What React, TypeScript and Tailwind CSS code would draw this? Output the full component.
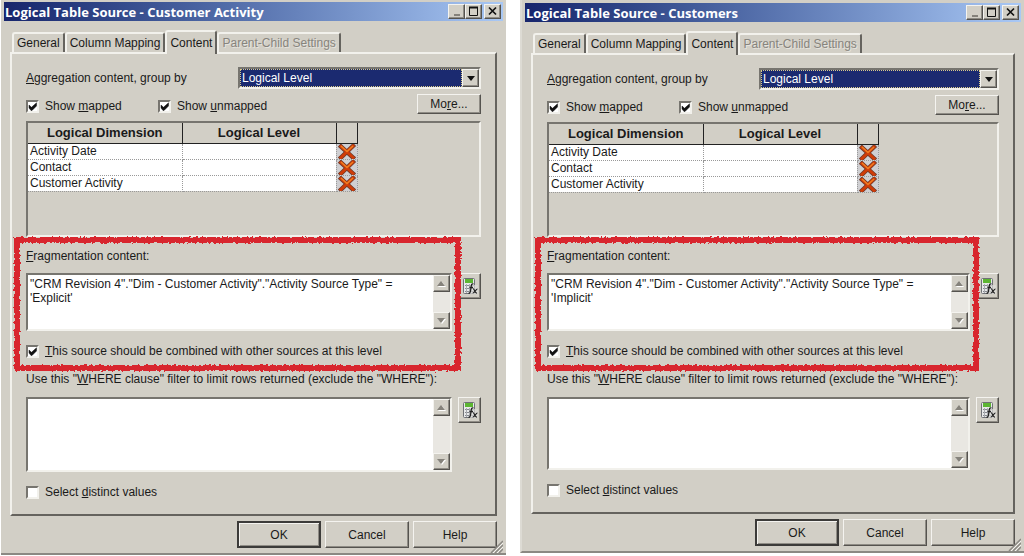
import type { ReactNode } from "react";

interface DialogProps {
  id: string;
  title: string;
  fragment: string;
  className: string;
  gridClass: string;
  whereClass: string;
}

const face = "bg-[#d2cfc6]";
const raised =
  "border border-t-[#f4f3ef] border-l-[#f4f3ef] border-r-[#55534f] border-b-[#55534f] shadow-[inset_-1px_-1px_0_#8f8c85]";
const sunken =
  "border-2 border-t-[#77756f] border-l-[#77756f] border-r-[#f2f1ec] border-b-[#f2f1ec]";

const rows = ["Activity Date", "Contact", "Customer Activity"];

function CheckBox({ id, checked = false, children }: { id: string; checked?: boolean; children: ReactNode }) {
  return (
    <div className="flex h-4 items-center gap-1.5">
      <span className="relative flex">
        <input
          id={id}
          type="checkbox"
          defaultChecked={checked}
          className={`peer size-[13px] appearance-none bg-white ${sunken}`}
        />
        <svg viewBox="0 0 13 13" className="pointer-events-none absolute inset-0 hidden size-[13px] peer-checked:block">
          <path d="M3 5v3l2 2.500h1l4.500-4.500V2.800L5.500 7.300z" fill="#111" stroke="#111" strokeWidth="0.500" />
        </svg>
      </span>
      <label htmlFor={id}>{children}</label>
    </div>
  );
}

function ScrollBar() {
  return (
    <div className="flex w-[17px] shrink-0 flex-col justify-between bg-[#e9e7e2]">
      <button type="button" aria-label="Scroll up" className={`flex h-[17px] items-center justify-center ${face} ${raised}`}>
        <svg viewBox="0 0 9 6" className="h-1.5 w-[9px]">
          <path d="M1 6h8L5 1z" fill="#fff" />
          <path d="M0 5h8L4 0z" fill="#85827b" />
        </svg>
      </button>
      <button type="button" aria-label="Scroll down" className={`flex h-[17px] items-center justify-center ${face} ${raised}`}>
        <svg viewBox="0 0 9 6" className="h-1.5 w-[9px]">
          <path d="M1 1h8L5 6z" fill="#fff" />
          <path d="M0 0h8L4 5z" fill="#85827b" />
        </svg>
      </button>
    </div>
  );
}

function FormulaButton() {
  return (
    <button type="button" aria-label="Expression builder" className={`flex h-[26px] w-[23px] shrink-0 items-center justify-center ${face} ${raised}`}>
      <svg viewBox="0 0 18 20" className="h-5 w-[18px]">
        <rect x="2.500" y="2.500" width="11" height="15" rx="1" fill="#e8e9ea" stroke="#6f7176" />
        <rect x="4" y="3" width="8" height="4" fill="#5cb532" />
        <path d="M4 9.500h9M4 12.500h9M4 15.500h9" stroke="#85888e" />
        <path d="M5.500 8v9M8.500 8v9" stroke="#a9abb0" />
        <rect x="9" y="9" width="8" height="9" fill="#dcdcd8" fillOpacity="0.7" />
        <path d="M12.500 8c-1.700-.8-2.200 1-2.400 3l-.6 4c-.3 1.800-.9 2.500-2 2M8.500 11.500h3.500" fill="none" stroke="#222" strokeWidth="1.300" />
        <path d="M12 13c1.500-.5 1.800 4.500 4 4M16.500 13c-1.500-.2-3 4.200-4.800 4" fill="none" stroke="#222" strokeWidth="1.200" />
      </svg>
    </button>
  );
}

function DeleteIcon() {
  return (
    <svg viewBox="0 0 20 15" className="mx-auto h-[15px] w-5">
      <path d="M4 2.500L16 13.500M16 2L4 13.500" stroke="#6b3a2c" strokeWidth="4.400" strokeLinecap="square" />
      <path d="M4 2.500L16 13.500M16 2L4 13.500" stroke="#cf3c08" strokeWidth="3" strokeLinecap="square" />
      <path d="M4 2L10 7.500L16 2" fill="none" stroke="#f07f22" strokeWidth="1.500" />
    </svg>
  );
}

function Marker({ id }: { id: string }) {
  return (
    <svg className="pointer-events-none absolute -top-2.5 -left-3 h-[calc(100%+22px)] w-[calc(100%-8px)] overflow-visible">
      <filter id={id} x="-2%" y="-5%" width="104%" height="110%">
        <feTurbulence type="fractalNoise" baseFrequency="0.4" numOctaves="2" result="noise" />
        <feDisplacementMap in="SourceGraphic" in2="noise" scale="4" xChannelSelector="R" yChannelSelector="G" />
      </filter>
      <rect x="3" y="3" className="h-[calc(100%-6px)] w-[calc(100%-6px)]" fill="none" stroke="#d8282e" strokeWidth="6" filter={`url(#${id})`} />
    </svg>
  );
}

function Tab({ active = false, disabled = false, children }: { active?: boolean; disabled?: boolean; children: ReactNode }) {
  return (
    <button
      type="button"
      role="tab"
      aria-selected={active}
      disabled={disabled}
      className={`rounded-t-[3px] border-t-2 border-l-2 border-r-2 border-t-[#f2f1ec] border-l-[#f2f1ec] border-r-[#65635e] px-[3px] whitespace-nowrap ${face} ${
        active ? "relative -mb-0.5 h-6" : "h-5"
      } ${disabled ? "text-[#87847d] [text-shadow:1px_1px_0_#e6e4de]" : ""}`}
    >
      {children}
    </button>
  );
}

function Dialog({ id, title, fragment, className, gridClass, whereClass }: DialogProps) {
  return (
    <section className={`border-b-2 border-b-[#8b8983] pr-[3px] pl-[3px] ${face} ${className}`}>
      <header className="flex h-[19px] items-center justify-between bg-linear-to-r from-[#17256c] to-[#a9c8f5] pr-0.5 pl-px">
        <h1 className="font-['Open_Sans',sans-serif] text-[13px] font-bold whitespace-nowrap text-white">{title}</h1>
        <div className="flex">
          <button type="button" aria-label="Minimize" className={`flex h-[15px] w-[17px] items-center justify-center ${face} ${raised}`}>
            <svg viewBox="0 0 13 11" className="h-[11px] w-[13px]">
              <path d="M4 9h6" stroke="#85827b" strokeWidth="2" />
            </svg>
          </button>
          <button type="button" aria-label="Maximize" className={`mr-0.5 flex h-[15px] w-[17px] items-center justify-center ${face} ${raised}`}>
            <svg viewBox="0 0 13 11" className="h-[11px] w-[13px]">
              <path d="M2.500 1v8.500h8V1" fill="none" stroke="#111" />
              <path d="M2 1.500h9" stroke="#111" strokeWidth="2" />
            </svg>
          </button>
          <button type="button" aria-label="Close" className={`flex h-[15px] w-[17px] items-center justify-center ${face} ${raised}`}>
            <svg viewBox="0 0 13 11" className="h-[11px] w-[13px]">
              <path d="M3 1.500l7 7M10 1.500l-7 7" stroke="#111" strokeWidth="1.700" />
            </svg>
          </button>
        </div>
      </header>

      <div className="pr-1.5 pl-1.5">
        <div role="tablist" className="flex items-end pt-[9px] pl-0.5">
          <Tab>General</Tab>
          <Tab>Column Mapping</Tab>
          <Tab active>Content</Tab>
          <Tab disabled>Parent-Child Settings</Tab>
        </div>

        <div className="border-2 border-t-[#f2f1ec] border-r-[#65635e] border-b-[#65635e] border-l-[#f2f1ec] px-3.5 pt-[13px] pb-3.5">
          <div className="flex items-center">
            <label htmlFor={`${id}-level`} className="w-[212px]">
              <u>A</u>ggregation content, group by
            </label>
            <div className={`flex h-[22px] flex-1 bg-white ${sunken}`}>
              <select id={`${id}-level`} className="min-w-0 flex-1 appearance-none border border-dotted border-[#d8c98a] bg-[#1b2a70] pl-px text-white">
                <option>Logical Level</option>
              </select>
              <span className={`flex w-[17px] items-center justify-center ${face} ${raised}`}>
                <svg viewBox="0 0 8 5" className="h-[5px] w-2">
                  <path d="M0 0h8L4 5z" fill="#111" />
                </svg>
              </span>
            </div>
          </div>

          <div className="mt-[5px] flex items-end">
            <div className="w-[132px]">
              <CheckBox id={`${id}-mapped`} checked>
                Show <u>m</u>apped
              </CheckBox>
            </div>
            <CheckBox id={`${id}-unmapped`} checked>
              Show <u>u</u>nmapped
            </CheckBox>
            <button type="button" className={`ml-auto h-5 w-16 ${face} ${raised}`}>
              Mo<u>r</u>e...
            </button>
          </div>

          {/* Dimension levels */}
          <div className={`mt-[7px] ${gridClass} ${sunken}`}>
            <table className="w-[330px] table-fixed border-collapse text-left">
              <thead>
                <tr className="h-5 text-center text-[13px]">
                  <th className="w-[154px] border-r border-b border-[#222]">Logical Dimension</th>
                  <th className="w-[154px] border-r border-b border-[#222]">Logical Level</th>
                  <th className="border-r border-b border-[#222]" aria-label="Remove" />
                </tr>
              </thead>
              <tbody>
                {rows.map((row) => (
                  <tr key={row} className="h-4 bg-white leading-[15px]">
                    <td className="border-r border-b border-dotted border-[#999] p-0 pl-0.5">{row}</td>
                    <td className="border-r border-b border-dotted border-[#999] p-0" />
                    <td className="border-r border-b border-dotted border-[#999] bg-[#cfcfd2] p-0">
                      <button type="button" aria-label={`Remove ${row}`} className="block w-full">
                        <DeleteIcon />
                      </button>
                    </td>
                  </tr>
                ))}
              </tbody>
            </table>
          </div>

          {/* Fragmentation */}
          <div className="relative mt-2.5">
            <label htmlFor={`${id}-fragment`} className="block h-[18px] leading-[18px]">
              <u>F</u>ragmentation content:
            </label>
            <div className="mt-2 flex items-start gap-1.5">
              <div className={`flex h-[58px] flex-1 bg-white ${sunken}`}>
                <textarea
                  id={`${id}-fragment`}
                  defaultValue={fragment}
                  className="min-w-0 flex-1 resize-none overflow-hidden px-0.5 py-0.5 leading-[14px]"
                />
                <ScrollBar />
              </div>
              <FormulaButton />
            </div>
            <div className="mt-3">
              <CheckBox id={`${id}-combined`} checked>
                <u>T</u>his source should be combined with other sources at this level
              </CheckBox>
            </div>
            <Marker id={`${id}-rough`} />
          </div>

          <label htmlFor={`${id}-where`} className="mt-3 block h-4 leading-4 whitespace-nowrap">
            Use this "<u>W</u>HERE clause" filter to limit rows returned (exclude the "WHERE"):
          </label>
          <div className="mt-2.5 flex items-start gap-1.5">
            <div className={`flex flex-1 bg-white ${whereClass} ${sunken}`}>
              <textarea id={`${id}-where`} className="min-w-0 flex-1 resize-none overflow-hidden px-0.5 py-0.5 leading-[14px]" />
              <ScrollBar />
            </div>
            <FormulaButton />
          </div>
          <div className="mt-3">
            <CheckBox id={`${id}-distinct`}>
              Select <u>d</u>istinct values
            </CheckBox>
          </div>
        </div>

        <footer className="relative flex justify-end gap-1 pt-[5px] pb-[5px]">
          <button type="button" className={`h-[27px] w-[84px] border-2 border-[#3c3b39] shadow-[inset_1px_1px_0_#f4f3ef,inset_-1px_-1px_0_#8f8c85] ${face}`}>
            OK
          </button>
          <button type="button" className={`h-[27px] w-[84px] ${face} ${raised}`}>
            Cancel
          </button>
          <button type="button" className={`h-[27px] w-[84px] ${face} ${raised}`}>
            Help
          </button>
          <svg viewBox="0 0 13 13" className="absolute -right-1.5 bottom-0 size-[13px]">
            <path d="M1 13L13 1M5 13l8-8M9 13l4-4" stroke="#8b8983" strokeWidth="1.500" />
            <path d="M3 13L13 3M7 13l6-6" stroke="#f4f3ef" />
          </svg>
        </footer>
      </div>
    </section>
  );
}

export default function App() {
  return (
    <main className="grid min-h-screen grid-cols-[505fr_504fr] items-start gap-3.5 bg-white pl-px font-['Liberation_Sans',Arial,sans-serif] text-[12px] leading-4 text-[#1a1a1a]">
      <Dialog
        id="activity"
        title="Logical Table Source - Customer Activity"
        fragment={`"CRM Revision 4"."Dim - Customer Activity"."Activity Source Type" =\n'Explicit'`}
        className="pt-0.5"
        gridClass="h-[116px]"
        whereClass="h-[75px]"
      />
      <Dialog
        id="customers"
        title="Logical Table Source - Customers"
        fragment={`"CRM Revision 4"."Dim - Customer Activity"."Activity Source Type" =\n'Implicit'`}
        className="border-l-2 border-l-[#dddbd4] pt-[3px]"
        gridClass="h-[115px]"
        whereClass="h-[73px]"
      />
    </main>
  );
}
